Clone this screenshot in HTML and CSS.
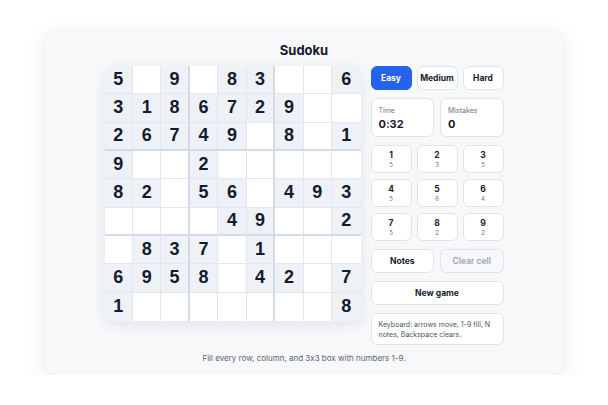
FILE: index.html
```html
<!DOCTYPE html>
<html lang="en">
<head>
<meta charset="utf-8">
<title>Sudoku</title>
<link rel="stylesheet" href="styles.css">
</head>
<body>
<main class="card">
  <h1 class="title">Sudoku</h1>
  <div class="game">
    <div class="board">
      <div class="cell given">5</div><div class="cell"></div><div class="cell given">9</div><div class="cell"></div><div class="cell given">8</div><div class="cell given">3</div><div class="cell"></div><div class="cell"></div><div class="cell given">6</div>
      <div class="cell given">3</div><div class="cell given">1</div><div class="cell given">8</div><div class="cell given">6</div><div class="cell given">7</div><div class="cell given">2</div><div class="cell given">9</div><div class="cell"></div><div class="cell"></div>
      <div class="cell given">2</div><div class="cell given">6</div><div class="cell given">7</div><div class="cell given">4</div><div class="cell given">9</div><div class="cell"></div><div class="cell given">8</div><div class="cell"></div><div class="cell given">1</div>
      <div class="cell given">9</div><div class="cell"></div><div class="cell"></div><div class="cell given">2</div><div class="cell"></div><div class="cell"></div><div class="cell"></div><div class="cell"></div><div class="cell"></div>
      <div class="cell given">8</div><div class="cell given">2</div><div class="cell"></div><div class="cell given">5</div><div class="cell given">6</div><div class="cell"></div><div class="cell given">4</div><div class="cell given">9</div><div class="cell given">3</div>
      <div class="cell"></div><div class="cell"></div><div class="cell"></div><div class="cell"></div><div class="cell given">4</div><div class="cell given">9</div><div class="cell"></div><div class="cell"></div><div class="cell given">2</div>
      <div class="cell"></div><div class="cell given">8</div><div class="cell given">3</div><div class="cell given">7</div><div class="cell"></div><div class="cell given">1</div><div class="cell"></div><div class="cell"></div><div class="cell"></div>
      <div class="cell given">6</div><div class="cell given">9</div><div class="cell given">5</div><div class="cell given">8</div><div class="cell"></div><div class="cell given">4</div><div class="cell given">2</div><div class="cell"></div><div class="cell given">7</div>
      <div class="cell given">1</div><div class="cell"></div><div class="cell"></div><div class="cell"></div><div class="cell"></div><div class="cell"></div><div class="cell"></div><div class="cell"></div><div class="cell given">8</div>
    </div>

    <aside class="panel">
      <div class="row3">
        <button class="btn btn-primary">Easy</button>
        <button class="btn">Medium</button>
        <button class="btn">Hard</button>
      </div>

      <div class="row2">
        <div class="stat">
          <span class="stat-label">Time</span>
          <span class="stat-value">0:32</span>
        </div>
        <div class="stat">
          <span class="stat-label">Mistakes</span>
          <span class="stat-value">0</span>
        </div>
      </div>

      <div class="pad">
        <button class="key"><span class="key-num">1</span><span class="key-left">5</span></button>
        <button class="key"><span class="key-num">2</span><span class="key-left">3</span></button>
        <button class="key"><span class="key-num">3</span><span class="key-left">5</span></button>
        <button class="key"><span class="key-num">4</span><span class="key-left">5</span></button>
        <button class="key"><span class="key-num">5</span><span class="key-left">6</span></button>
        <button class="key"><span class="key-num">6</span><span class="key-left">4</span></button>
        <button class="key"><span class="key-num">7</span><span class="key-left">5</span></button>
        <button class="key"><span class="key-num">8</span><span class="key-left">2</span></button>
        <button class="key"><span class="key-num">9</span><span class="key-left">2</span></button>
      </div>

      <div class="row2">
        <button class="btn">Notes</button>
        <button class="btn btn-disabled" disabled>Clear cell</button>
      </div>

      <button class="btn btn-wide">New game</button>

      <p class="hint">Keyboard: arrows move, 1-9 fill, N notes, Backspace clears.</p>
    </aside>
  </div>
  <p class="footer">Fill every row, column, and 3x3 box with numbers 1-9.</p>
</main>
</body>
</html>
```

FILE: styles.css
```css
* {
  box-sizing: border-box;
}

html,
body {
  margin: 0;
  background: #ffffff;
}

body {
  font-family: Inter, "Noto Sans", "Liberation Sans", sans-serif;
  font-feature-settings: "calt" 0;
  color: #141b2d;
}

.card {
  width: 520px;
  margin: 28px auto 0;
  padding: 12px 18px 10px;
  background: #f7f8fa;
  border-radius: 14px;
  box-shadow: 0 6px 22px rgba(15, 23, 42, 0.08), 0 1px 3px rgba(15, 23, 42, 0.04);
}

.title {
  margin: 0;
  font-size: 13px;
  line-height: 20px;
  font-weight: 700;
  text-align: center;
  color: #141b2d;
}

.game {
  display: flex;
  justify-content: center;
  align-items: flex-start;
  gap: 10px;
  margin-top: 6px;
}

/* 9x9 board */
.board {
  width: 256px;
  height: 255px;
  display: grid;
  grid-template-columns: repeat(9, 1fr);
  grid-template-rows: repeat(9, 1fr);
  background: #ffffff;
  border-radius: 8px;
  overflow: hidden;
  box-shadow: 0 4px 14px rgba(15, 23, 42, 0.09);
}

.cell {
  display: flex;
  align-items: center;
  justify-content: center;
  border-right: 1px solid #e2e7ef;
  border-bottom: 1px solid #e2e7ef;
  font-family: "Liberation Sans", Arial, sans-serif;
  font-weight: 700;
  font-size: 18px;
  color: #141b2d;
  background: #ffffff;
}

.cell.given {
  background: #eef2f7;
}

/* box separators */
.cell:nth-child(9n+3),
.cell:nth-child(9n+6) {
  border-right: 2px solid #d3dbe6;
}

.cell:nth-child(9n) {
  border-right: none;
}

.cell:nth-child(n+19):nth-child(-n+27),
.cell:nth-child(n+46):nth-child(-n+54) {
  border-bottom: 2px solid #d3dbe6;
}

.cell:nth-child(n+73) {
  border-bottom: none;
}

/* side panel */
.panel {
  width: 133px;
  display: flex;
  flex-direction: column;
  gap: 8px;
}

.row3 {
  display: grid;
  grid-template-columns: repeat(3, 1fr);
  gap: 5px;
}

.row2 {
  display: grid;
  grid-template-columns: 1fr 1fr;
  gap: 6px;
}

.btn {
  height: 24px;
  padding: 0;
  border: 1px solid #dfe4ec;
  border-radius: 6px;
  background: #ffffff;
  font-family: inherit;
  font-feature-settings: "calt" 0;
  font-size: 8.5px;
  font-weight: 700;
  color: #141b2d;
}

.btn-primary {
  background: #2563eb;
  border-color: #2563eb;
  color: #ffffff;
}

.btn-disabled {
  background: #f7f8fa;
  color: #9ba3b1;
  font-weight: 600;
}

.btn-wide {
  width: 100%;
}

.stat {
  height: 39px;
  padding: 7px 7px;
  display: flex;
  flex-direction: column;
  gap: 3px;
  background: #ffffff;
  border: 1px solid #dfe4ec;
  border-radius: 6px;
}

.stat-label {
  font-size: 7px;
  line-height: 9px;
  color: #6b7385;
}

.stat-value {
  font-size: 11px;
  line-height: 13px;
  font-weight: 700;
}

.pad {
  display: grid;
  grid-template-columns: repeat(3, 1fr);
  grid-auto-rows: 28px;
  gap: 6px 5px;
}

.key {
  padding: 0;
  display: flex;
  flex-direction: column;
  align-items: center;
  justify-content: center;
  gap: 1px;
  background: #ffffff;
  border: 1px solid #dfe4ec;
  border-radius: 6px;
  font-family: inherit;
  color: #141b2d;
}

.key-num {
  font-size: 8.5px;
  line-height: 10px;
  font-weight: 700;
}

.key-left {
  font-size: 6px;
  line-height: 8px;
  color: #6b7385;
}

.hint {
  margin: 0;
  height: 32px;
  padding: 6px 7px;
  background: #ffffff;
  border: 1px solid #dfe4ec;
  border-radius: 6px;
  font-size: 7px;
  line-height: 10px;
  color: #4b5466;
}

.footer {
  margin: 6px 0 0;
  font-size: 8px;
  line-height: 14px;
  text-align: center;
  color: #5b6376;
}
```
